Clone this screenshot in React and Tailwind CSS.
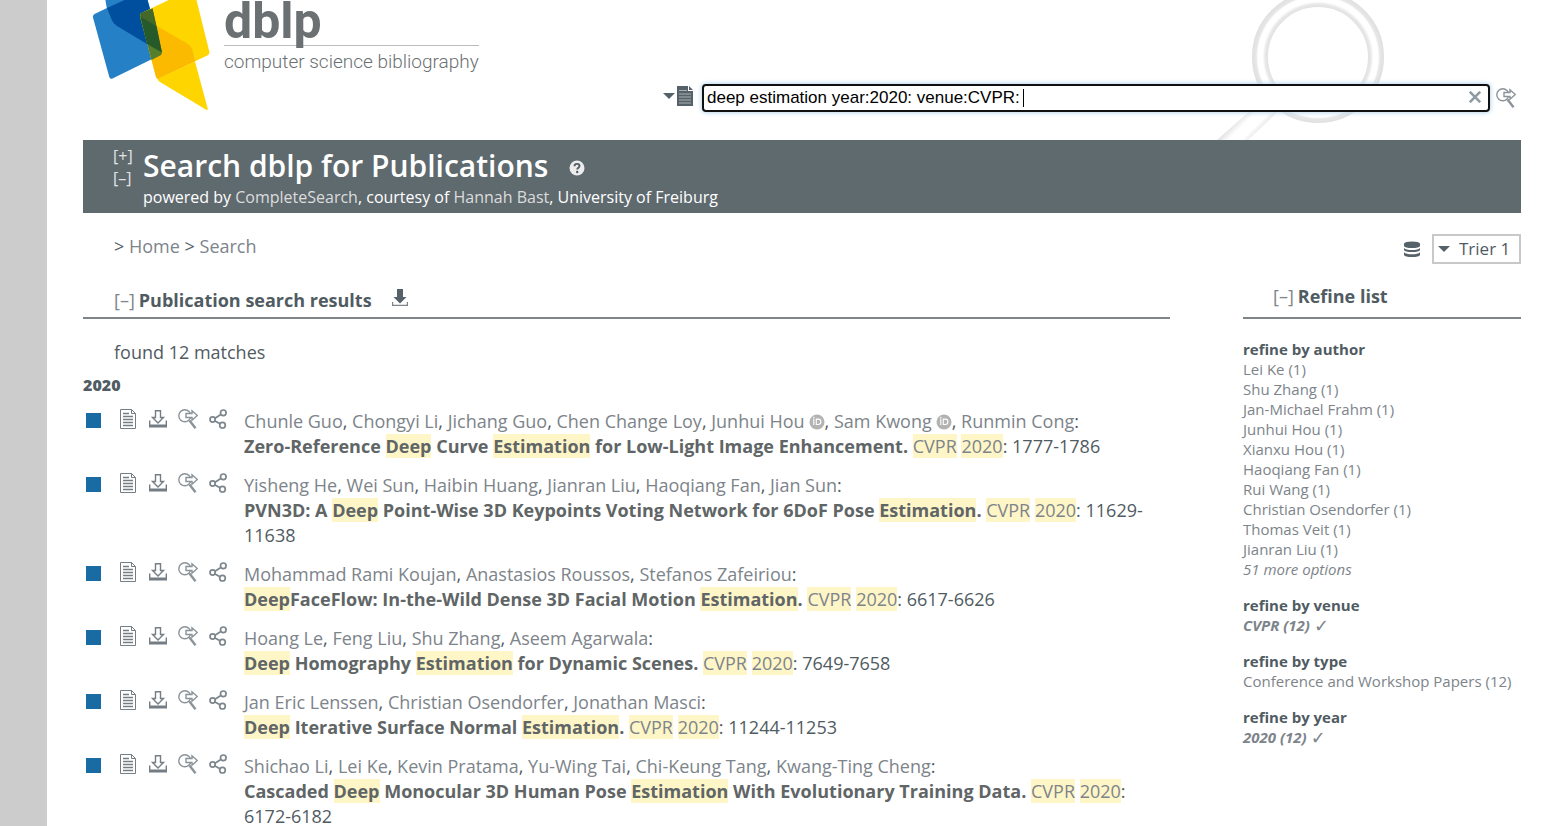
import { Fragment } from "react";

const results = [
  {
    authors: [
      { name: "Chunle Guo" },
      { name: "Chongyi Li" },
      { name: "Jichang Guo" },
      { name: "Chen Change Loy" },
      { name: "Junhui Hou", orcid: true },
      { name: "Sam Kwong", orcid: true },
      { name: "Runmin Cong" },
    ],
    title:
      "Zero-Reference [Deep] Curve [Estimation] for Low-Light Image Enhancement.",
    pages: "1777-1786",
  },
  {
    authors: [
      { name: "Yisheng He" },
      { name: "Wei Sun" },
      { name: "Haibin Huang" },
      { name: "Jianran Liu" },
      { name: "Haoqiang Fan" },
      { name: "Jian Sun" },
    ],
    title:
      "PVN3D: A [Deep] Point-Wise 3D Keypoints Voting Network for 6DoF Pose [Estimation].",
    pages: "11629-11638",
  },
  {
    authors: [
      { name: "Mohammad Rami Koujan" },
      { name: "Anastasios Roussos" },
      { name: "Stefanos Zafeiriou" },
    ],
    title: "[Deep]FaceFlow: In-the-Wild Dense 3D Facial Motion [Estimation].",
    pages: "6617-6626",
  },
  {
    authors: [
      { name: "Hoang Le" },
      { name: "Feng Liu" },
      { name: "Shu Zhang" },
      { name: "Aseem Agarwala" },
    ],
    title: "[Deep] Homography [Estimation] for Dynamic Scenes.",
    pages: "7649-7658",
  },
  {
    authors: [
      { name: "Jan Eric Lenssen" },
      { name: "Christian Osendorfer" },
      { name: "Jonathan Masci" },
    ],
    title: "[Deep] Iterative Surface Normal [Estimation].",
    pages: "11244-11253",
  },
  {
    authors: [
      { name: "Shichao Li" },
      { name: "Lei Ke" },
      { name: "Kevin Pratama" },
      { name: "Yu-Wing Tai" },
      { name: "Chi-Keung Tang" },
      { name: "Kwang-Ting Cheng" },
    ],
    title:
      "Cascaded [Deep] Monocular 3D Human Pose [Estimation] With Evolutionary Training Data.",
    pages: "6172-6182",
  },
];

const facets = [
  {
    title: "refine by author",
    items: [
      "Lei Ke (1)",
      "Shu Zhang (1)",
      "Jan-Michael Frahm (1)",
      "Junhui Hou (1)",
      "Xianxu Hou (1)",
      "Haoqiang Fan (1)",
      "Rui Wang (1)",
      "Christian Osendorfer (1)",
      "Thomas Veit (1)",
      "Jianran Liu (1)",
    ],
    more: "51 more options",
  },
  { title: "refine by venue", items: ["CVPR (12)"], active: true },
  { title: "refine by type", items: ["Conference and Workshop Papers (12)"] },
  { title: "refine by year", items: ["2020 (12)"], active: true },
];

function Logo() {
  return (
    <svg
      className="h-[112px] w-[122px] shrink-0"
      viewBox="90 0 122 112"
      aria-hidden="true"
    >
      <path d="M105-2h25L107 9z" fill="#2680c6" />
      <path
        d="M94.500 14 107 8l22-10h18l14.800 53q.6 3-2 4.300L112.500 78.500q-2.500 1-3.200-1.500L93 17.500q-.5-2.300 1.500-3.500z"
        fill="#2680c6"
      />
      <path d="M107 8 129-2h18l6 22-6 24-30-18q-4-2.500-5.200-6z" fill="#004f9f" />
      <path
        d="M141.500 13 173-2h23l13.300 53.500q.6 2.500-2 4L159 78.500q-2 .8-3-1.500L140 16.500q-.6-2.500 1.500-3.500z"
        fill="#ffd500"
      />
      <path
        d="M140.500 16.500 188 44q3.500 2.500 4.500 6l2.500 11.500L159 78.500q-2.300 1-3-1.500z"
        fill="#fbba00"
      />
      <path
        d="M141.500 13 152.500 8.500 161.800 51.500q.6 3-2 4.300L151.500 60 140 16.500q-.5-2.500 1.500-3.500z"
        fill="#567f2b"
      />
      <path d="M141.500 13 152.500 8.500 156.500 26 140.500 16.500q-.3-2.500 1-3.500z" fill="#44682a" />
      <path d="m140.500 16.500 16 9.500 5.500 26.500L147 44z" fill="#265a2b" />
      <path d="M157.500 79 195 61.500l12.800 47.500q0 1.500-1.600.8L160 82q-1.800-1.200-2.500-3z" fill="#ffd500" />
    </svg>
  );
}

function Magnifier() {
  return (
    <svg
      className="absolute top-0 right-[136px] h-[140px] w-[190px]"
      viewBox="1195 0 190 140"
      aria-hidden="true"
    >
      <defs>
        <radialGradient
          id="ring"
          gradientUnits="userSpaceOnUse"
          cx="1318"
          cy="57"
          r="66"
        >
          <stop offset="0.75" stopColor="#e0e0e0" />
          <stop offset="0.8" stopColor="#e8e8e8" />
          <stop offset="0.84" stopColor="#fff" />
          <stop offset="0.91" stopColor="#fff" />
          <stop offset="0.94" stopColor="#e6e6e6" />
          <stop offset="1" stopColor="#e0e0e0" />
        </radialGradient>
        <linearGradient
          id="handle"
          gradientUnits="userSpaceOnUse"
          x1="1227"
          y1="128"
          x2="1249"
          y2="150"
        >
          <stop offset="0" stopColor="#dcdcdc" />
          <stop offset="0.3" stopColor="#fff" />
          <stop offset="0.6" stopColor="#fff" />
          <stop offset="0.9" stopColor="#dcdcdc" />
        </linearGradient>
      </defs>
      <path d="M1217 140 1268 95l22 5-42 40z" fill="url(#handle)" />
      <circle cx="1318" cy="57" r="58" fill="none" stroke="url(#ring)" strokeWidth="16" />
    </svg>
  );
}

function DocIcon() {
  return (
    <svg
      className="h-5 w-4"
      viewBox="0 0 16 20"
      fill="none"
      stroke="#747d84"
      aria-hidden="true"
    >
      <path d="M.5.500h11l4 4v15H.5z" />
      <path d="M11.500.500v4h4" />
      <path d="M3 4.500h6M3 7.500h10M3 10.500h10M3 13.500h10M3 16.500h10" strokeWidth="1.300" />
    </svg>
  );
}

function DocSolidIcon() {
  return (
    <svg className="h-5 w-4" viewBox="0 0 16 20" aria-hidden="true">
      <path d="M0 0h11v5h5v15H0z" fill="#566269" />
      <path d="m12 0 4 4h-4z" fill="#566269" />
      <path d="M2 4.500h8M2 8h12M2 11h12M2 14h12M2 17h12" stroke="#a9b0b4" />
    </svg>
  );
}

function ExportIcon() {
  return (
    <svg
      className="h-[18px] w-[18px]"
      viewBox="0 0 18 18"
      fill="none"
      stroke="#747d84"
      strokeWidth="1.400"
      aria-hidden="true"
    >
      <path d="M6.500.7h5v6.800h3L9 13 3.500 7.500h3z" />
      <path d="M.7 10.500v6.300h16.600v-6.300M.7 15.300h16.600" />
    </svg>
  );
}

function SearchArrowIcon() {
  return (
    <svg
      className="h-5 w-5"
      viewBox="0 0 20 20"
      fill="none"
      stroke="#8a9399"
      strokeWidth="1.400"
      aria-hidden="true"
    >
      <circle cx="6.800" cy="6.800" r="6" />
      <path d="M8 4.500h6V1.800L19.300 6.500 14 11.200V8.500H8z" fill="#fff" />
      <path d="m11.500 11.500 6 7.700" strokeWidth="2.400" />
    </svg>
  );
}

function ShareIcon() {
  return (
    <svg
      className="h-5 w-[18px]"
      viewBox="0 0 18 20"
      fill="none"
      stroke="#7d868c"
      strokeWidth="1.700"
      aria-hidden="true"
    >
      <circle cx="3.600" cy="10.500" r="2.600" />
      <circle cx="14.300" cy="3.800" r="2.800" />
      <circle cx="13.500" cy="16.200" r="2.800" />
      <path d="m6 9.200 5.800-3.700M6 12l5 2.800" />
    </svg>
  );
}

function OrcidIcon() {
  return (
    <svg
      className="ml-1 inline-block h-4 w-4 align-[-2px]"
      viewBox="0 0 16 16"
      aria-hidden="true"
    >
      <circle cx="8" cy="8" r="7.500" fill="#b3b3b3" />
      <path
        d="M4.800 4.600v6.400M7.300 5.100h1.900a2.700 2.700 0 0 1 0 5.400H7.300z"
        fill="none"
        stroke="#fff"
        strokeWidth="1.100"
      />
      <circle cx="4.800" cy="3.400" r=".7" fill="#fff" />
    </svg>
  );
}

function DownloadIcon() {
  return (
    <svg className="h-[18px] w-4" viewBox="0 0 16 18" aria-hidden="true">
      <path d="M5 0h6v8h3.500L8 14.500 1.500 8H5z" fill="#566269" />
      <path d="M.6 13v3.400h14.800V13" fill="none" stroke="#7d848a" strokeWidth="1.200" />
    </svg>
  );
}

function DatabaseIcon() {
  return (
    <svg className="h-[18px] w-4" viewBox="0 0 16 18" fill="#566269" aria-hidden="true">
      <path d="M0 3.500Q1 1.500 8 1.500t8 2v2.500Q15 8 8 8T0 6z" />
      <path d="M0 8q2 2 8 2t8-2v2q-1 2-8 2t-8-2z" />
      <path d="M0 12.300q2 2 8 2t8-2v2.700q-1 2-8 2t-8-2z" />
    </svg>
  );
}

function HelpIcon() {
  return (
    <svg className="mt-1 h-4 w-4" viewBox="0 0 16 16" aria-hidden="true">
      <circle cx="8" cy="8" r="7.500" fill="#ececec" />
      <path
        d="M5.500 6.200Q5.500 3.900 8 3.900t2.500 2.100c0 1.700-2.300 1.700-2.300 3.500"
        fill="none"
        stroke="#505b62"
        strokeWidth="1.900"
      />
      <circle cx="8.200" cy="12" r="1.200" fill="#505b62" />
    </svg>
  );
}

function Caret() {
  return (
    <svg className="h-[6px] w-[12px]" viewBox="0 0 12 6" aria-hidden="true">
      <path d="M0 0h12L6 6z" fill="#566269" />
    </svg>
  );
}

function Mark({ children }) {
  return <mark className="bg-[#fff6c8] text-inherit">{children}</mark>;
}

function Title({ text }) {
  return (
    <span className="font-bold text-[#606566]">
      {text.split(/(\[.*?\])/).map((part, i) =>
        part.startsWith("[") ? (
          <Mark key={i}>{part.slice(1, -1)}</Mark>
        ) : (
          <Fragment key={i}>{part}</Fragment>
        ),
      )}
    </span>
  );
}

function Publication({ authors, title, pages }) {
  return (
    <li className="flex text-lg leading-[25px]">
      <div className="mt-1 ml-[3px] h-[15px] w-[15px] shrink-0 bg-[#196ca3]" />
      <div className="mr-[11px] ml-3 flex h-5 shrink-0 items-center">
        <button aria-label="Details" className="flex w-[30px] justify-center">
          <DocIcon />
        </button>
        <button aria-label="Export record" className="flex w-[30px] justify-center">
          <ExportIcon />
        </button>
        <button aria-label="Look up" className="flex w-[30px] justify-center">
          <SearchArrowIcon />
        </button>
        <button aria-label="Share" className="flex w-[30px] justify-center">
          <ShareIcon />
        </button>
      </div>
      <cite className="min-w-0 flex-1 not-italic">
        {authors.map((author, i) => (
          <Fragment key={author.name}>
            <a href="#" className="text-[#7d848a]">
              {author.name}
            </a>
            {author.orcid && <OrcidIcon />}
            {i < authors.length - 1 ? ", " : ":"}
          </Fragment>
        ))}
        <br />
        <Title text={title} />{" "}
        <a href="#" className="text-[#7d848a]">
          <Mark>CVPR</Mark> <Mark>2020</Mark>
        </a>
        : {pages}
      </cite>
    </li>
  );
}

function Facet({ title, items, more, active }) {
  return (
    <div className="text-[15px] leading-5">
      <h3 className="font-bold">{title}</h3>
      <ul className="text-[#7d848a]">
        {items.map((item) => (
          <li key={item} className="flex gap-1">
            <a href="#" className={active ? "font-bold italic" : ""}>
              {item}
            </a>
            {active && <span className="text-lg leading-5">✓</span>}
          </li>
        ))}
        {more && (
          <li>
            <a href="#" className="italic">
              {more}
            </a>
          </li>
        )}
      </ul>
    </div>
  );
}

export default function App() {
  return (
    <div className="h-screen overflow-hidden border-l-[47px] border-[#ccc] bg-white pr-[21px] pl-9 font-['Open_Sans','DejaVu_Sans',sans-serif] text-[#505b62]">
      {/* Logo and search box */}
      <header className="relative flex h-[140px] items-start">
        <Magnifier />
        <a href="#" className="ml-[7px] flex font-[Roboto,sans-serif] text-[#6b7073]">
          <Logo />
          <span className="ml-3">
            <span className="block h-[46px] border-b border-[#b9bcbe] text-[50px] leading-[42px] font-bold">
              dblp
            </span>
            <span className="block text-[19px] leading-8 font-light">
              computer science bibliography
            </span>
          </span>
        </a>
        <form
          className="relative mt-[84px] ml-auto flex w-[860px] items-center"
          onSubmit={(e) => e.preventDefault()}
        >
          <button
            type="button"
            aria-label="Search mode"
            className="mr-[9px] mb-1 ml-0.5 flex items-center gap-0.5"
          >
            <Caret />
            <DocSolidIcon />
          </button>
          <div className="relative flex-1">
            <input
              type="text"
              aria-label="Search dblp"
              defaultValue="deep estimation year:2020: venue:CVPR: "
              className="block h-7 w-full rounded-sm border-2 border-[#101010] bg-white px-[3px] font-['Liberation_Sans',sans-serif] text-[17px] text-black shadow-[0_0_4px_1px_#b9d9f0] outline-none"
            />
            <span className="absolute top-[5px] left-[321px] h-[18px] w-px bg-black" />
            <button type="button" aria-label="Clear" className="absolute top-[7px] right-[9px]">
              <svg
                className="h-3 w-3"
                viewBox="0 0 12 12"
                stroke="#8f9ba3"
                strokeWidth="2.600"
              >
                <path d="m.8.8 10.400 10.400M11.200.8.8 11.200" />
              </svg>
            </button>
          </div>
          <button aria-label="Search" className="mr-[5px] ml-1.5">
            <SearchArrowIcon />
          </button>
        </form>
      </header>

      {/* Page headline */}
      <div className="flex h-[73px] bg-[#5f6a6f] pl-[30px] text-white">
        <div className="mt-[5px] flex w-[30px] flex-col items-start text-base leading-[22px] text-[#e4e4e4]">
          <button>[+]</button>
          <button>[–]</button>
        </div>
        <div>
          <div className="flex items-center gap-[21px] pt-1.5">
            <h1 className="text-[30px] leading-10 font-semibold">
              Search dblp for Publications
            </h1>
            <HelpIcon />
          </div>
          <p className="text-base leading-[22px]">
            powered by{" "}
            <a href="#" className="text-[#dcdcdc]">
              CompleteSearch
            </a>
            , courtesy of{" "}
            <a href="#" className="text-[#dcdcdc]">
              Hannah Bast
            </a>
            , University of Freiburg
          </p>
        </div>
      </div>

      {/* Breadcrumbs and mirror selection */}
      <div className="flex h-[72px] items-start justify-between pt-[21px]">
        <nav className="ml-[31px] text-lg leading-[25px]">
          &gt;{" "}
          <a href="#" className="text-[#7d848a]">
            Home
          </a>{" "}
          &gt;{" "}
          <a href="#" className="text-[#7d848a]">
            Search
          </a>
        </nav>
        <div className="flex items-center gap-3">
          <DatabaseIcon />
          <div className="relative">
            <select
              aria-label="Mirror"
              className="block h-[30px] w-[89px] appearance-none border-2 border-[#c8c8c8] bg-white pl-[25px] text-[17px] leading-[26px]"
            >
              <option>Trier 1</option>
            </select>
            <span className="pointer-events-none absolute top-3 left-1.5">
              <Caret />
            </span>
          </div>
        </div>
      </div>

      <div className="flex gap-[73px]">
        <main className="min-w-0 flex-1">
          <header className="flex h-[34px] items-center border-b-2 border-[#7d848a] pb-0.5 pl-[31px] text-lg">
            <button className="mr-1 text-[#7d848a]">[–]</button>
            <h2 className="font-bold">Publication search results</h2>
            <button aria-label="Export results" className="mb-1 ml-5">
              <DownloadIcon />
            </button>
          </header>
          <p className="mt-[21px] ml-[31px] text-lg leading-[25px]">
            found 12 matches
          </p>
          <h3 className="mt-2 text-base leading-6 font-extrabold">2020</h3>
          <ul className="mt-3 flex flex-col gap-3.5">
            {results.map((result) => (
              <Publication key={result.title} {...result} />
            ))}
          </ul>
        </main>

        <aside className="w-[278px] shrink-0">
          <header className="flex h-[34px] items-start border-b-2 border-[#7d848a] pl-[30px] text-lg leading-[22px]">
            <button className="mr-1 text-[#7d848a]">[–]</button>
            <h2 className="font-bold">Refine list</h2>
          </header>
          <div className="mt-5 flex flex-col gap-4">
            {facets.map((facet) => (
              <Facet key={facet.title} {...facet} />
            ))}
          </div>
        </aside>
      </div>
    </div>
  );
}
